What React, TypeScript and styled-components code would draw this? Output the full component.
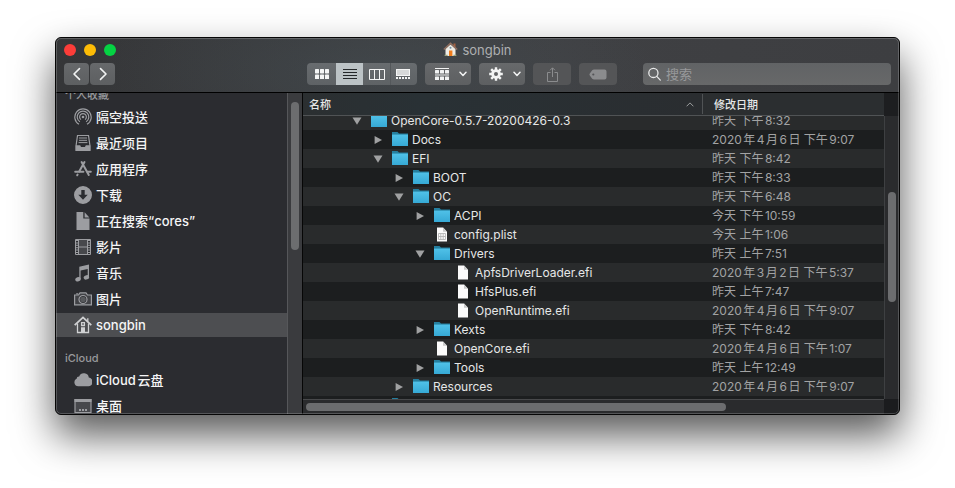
import React, { useLayoutEffect, useRef } from "react";
import styled, { createGlobalStyle } from "styled-components";

const GlobalStyle = createGlobalStyle`
  * { box-sizing: border-box; }
  body {
    margin: 0;
    background: #fff;
    font-family: Inter, "Noto Sans CJK SC", sans-serif;
    font-size: 12px;
    text-autospace: normal;
    -webkit-font-smoothing: antialiased;
  }
  button, input { font: inherit; color: inherit; border: 0; padding: 0; background: none; }
  a { color: inherit; text-decoration: none; }
  svg { display: block; flex: none; }
`;

const Desktop = styled.div`
  display: flex;
  height: 100vh;
  min-height: 300px;
  padding: 37px 55px 73px;
`;

const Window = styled.main`
  position: relative;
  flex: 1;
  min-width: 0;
  display: flex;
  flex-direction: column;
  overflow: hidden;
  border: 1px solid #060606;
  border-radius: 6px;
  background: #2b2c2f;
  box-shadow: 0 20px 40px rgba(0, 0, 0, 0.66);

  &::after {
    content: "";
    position: absolute;
    inset: 0;
    border: 1px solid rgba(255, 255, 255, 0.2);
    border-radius: 5px;
    pointer-events: none;
  }
`;

const TitleArea = styled.header`
  flex: none;
  border-bottom: 1px solid #000;
  background:
    radial-gradient(ellipse 280px 90px at 38% 60%, rgba(76, 90, 96, 0.34), transparent),
    linear-gradient(90deg, #353638, #3f4043 60%, #3d3e41);
`;

const TitleBar = styled.div`
  display: grid;
  grid-template-columns: 1fr auto 1fr;
  align-items: center;
  height: 23px;
  padding: 0 8px;
`;

const Lights = styled.div`
  display: flex;
  gap: 8px;
`;

const Light = styled.button<{ $color: string }>`
  width: 12px;
  height: 12px;
  border-radius: 50%;
  background: ${(p) => p.$color};
`;

const Title = styled.h1`
  display: flex;
  align-items: center;
  gap: 4px;
  margin: 0;
  font-size: 13px;
  font-weight: 400;
  line-height: 16px;
  color: #aeafb1;
`;

const Toolbar = styled.div`
  display: flex;
  align-items: center;
  gap: 8px;
  padding: 2px 8px 7px;
`;

const ButtonGroup = styled.div`
  display: flex;
  gap: 1px;
`;

const ToolButton = styled.button<{ $width: number; $dim?: boolean }>`
  display: flex;
  align-items: center;
  justify-content: center;
  width: ${(p) => p.$width}px;
  height: 22px;
  border-radius: 4px;
  background: ${(p) => (p.$dim ? "#545557" : "linear-gradient(#67696b, #5d5f61)")};
  color: ${(p) => (p.$dim ? "#8b8c8e" : "#f2f3f3")};
`;

const MenuButton = styled(ToolButton)`
  gap: 10px;
  padding-left: 6px;
`;

const Segments = styled.div`
  display: flex;
  margin-left: 184px;
  border-radius: 4px;
  overflow: hidden;
  background: linear-gradient(#686c6f, #5e6265);
`;

const Segment = styled.button<{ $selected?: boolean }>`
  display: flex;
  align-items: center;
  justify-content: center;
  width: 27px;
  height: 22px;
  color: ${(p) => (p.$selected ? "#24282a" : "#f4f5f5")};
  background: ${(p) => (p.$selected ? "#bcc3c6" : "transparent")};

  &:first-child { width: 29px; }
  &:last-child { border-left: 1px solid #54585b; padding-right: 3px; }
`;

const Search = styled.label`
  flex: 1;
  min-width: 0;
  display: flex;
  align-items: center;
  gap: 5px;
  height: 22px;
  margin-left: 18px;
  padding: 0 5px;
  border-radius: 4px;
  background: linear-gradient(#616365, #676869);
  color: #e8e9e9;
`;

const SearchInput = styled.input`
  flex: 1;
  min-width: 0;
  font-size: 13px;
  outline: none;

  &::placeholder { color: #98999b; opacity: 1; }
`;

const Body = styled.div`
  flex: 1;
  min-height: 0;
  display: flex;
`;

const Sidebar = styled.nav`
  flex: none;
  width: 231px;
  overflow: hidden;
  background: #2b2c30;
  color: #f5f5f6;
`;

const SidebarContent = styled.div`
  padding: 4px 0 40px;
`;

const SectionLabel = styled.h2`
  margin: 0;
  padding: 0 9px;
  font-size: 11px;
  font-weight: 500;
  line-height: 16px;
  color: #98999c;
`;

const Places = styled.ul`
  display: flex;
  flex-direction: column;
  gap: 2px;
  margin: 2px 0 13px;
  padding: 0;
  list-style: none;
`;

const Place = styled.a<{ $selected?: boolean }>`
  display: flex;
  align-items: center;
  gap: 4px;
  height: 24px;
  padding-left: 18px;
  font-size: 13px;
  font-weight: 500;
  line-height: 16px;
  white-space: nowrap;
  background: ${(p) => (p.$selected ? "#4d4e51" : "transparent")};

  svg { color: ${(p) => (p.$selected ? "#d0d1d3" : "#9c9da1")}; }
`;

const Lane = styled.div<{ $tone: string }>`
  flex: 1;
  background: ${(p) => p.$tone};
`;

const SidebarLane = styled(Lane)`
  flex: none;
  width: 16px;
  padding: 9px 3px 0;
  border-left: 1px solid #56575a;
  border-right: 1px solid #060606;
`;

const VerticalThumb = styled.div<{ $length: number; $offset?: number }>`
  width: 8px;
  height: ${(p) => p.$length}px;
  margin-top: ${(p) => p.$offset ?? 0}px;
  border-radius: 4px;
  background: #6c6d6f;
`;

const Browser = styled.section`
  flex: 1;
  min-width: 0;
  display: grid;
  grid-template-columns: minmax(0, 1fr) 15px;
  grid-template-rows: minmax(0, 1fr) 15px;
`;

const ListView = styled.div`
  overflow: hidden;
  background: #1c1e1f;
`;

const Table = styled.table`
  width: 100%;
  table-layout: fixed;
  border-spacing: 0;
  color: #e6e7e7;
`;

const HeaderCell = styled.th<{ $width?: number }>`
  position: sticky;
  top: 0;
  z-index: 1;
  width: ${(p) => (p.$width ? `${p.$width}px` : "auto")};
  height: 23px;
  padding: 0;
  border-bottom: 1px solid #505355;
  background: ${(p) => (p.$width ? "#2b2e30" : "linear-gradient(90deg, #2b2f31, #293135 30%, #2a2d30)")};
  font-size: 11px;
  font-weight: 500;
  text-align: left;
`;

const HeaderLabel = styled.button<{ $ruled?: boolean }>`
  display: flex;
  align-items: center;
  justify-content: space-between;
  width: 100%;
  height: 20px;
  padding: 0 8px 0 ${(p) => (p.$ruled ? 11 : 6)}px;
  border-left: ${(p) => (p.$ruled ? "1px solid #505355" : "0")};
`;

const Row = styled.tr`
  height: 19px;
  background: #1c1e1f;

  &:nth-child(odd) { background: #292b2c; }
`;

const Cell = styled.td`
  height: 19px;
  padding: 0;
  line-height: 19px;
  white-space: nowrap;
  overflow: hidden;
`;

const DateCell = styled(Cell)`
  padding-left: 10px;
  color: #a2a3a4;
`;

const Name = styled.div<{ $level: number }>`
  display: flex;
  align-items: center;
  height: 19px;
  padding-left: ${(p) => 48 + p.$level * 21}px;
`;

const Disclosure = styled.button`
  display: flex;
  align-items: center;
  justify-content: center;
  width: 12px;
  height: 19px;
  margin-right: 8px;
  color: #a0a1a2;
`;

const DisclosureGap = styled.span`
  width: 20px;
`;

const FileIcon = styled.span`
  display: flex;
  justify-content: center;
  width: 16px;
  margin-right: 4px;
  padding-bottom: 1px;
`;

const RightRail = styled.div`
  display: flex;
  flex-direction: column;
`;

const RailHead = styled.div`
  height: 23px;
  background: #1d1e20;
`;

const RightLane = styled(Lane)`
  padding: 0 3px;
  border-left: 1px solid #3e4042;
`;

const BottomLane = styled.div`
  padding: 3px 3px 0;
  border-top: 1px solid #48494b;
  background: #2a2b2d;
`;

const HorizontalThumb = styled.div`
  width: 73%;
  height: 8px;
  border-radius: 4px;
  background: #6c6d6f;
`;

const Corner = styled.div`
  background: #1b1c1e;
`;

const HomeEmoji = () => (
  <svg width="15" height="15" viewBox="0 0 15 15" aria-hidden="true">
    <rect x="10.500" y="1.500" width="2" height="4" fill="#a5613f" />
    <path d="M2.500 7 7.500 2.500 12.500 7V14H2.500Z" fill="#eeece5" />
    <path d="M.8 7.600 7.500 1.200 14.200 7.600" fill="none" stroke="#937060" strokeWidth="1.400" />
    <rect x="6" y="8.500" width="3.400" height="5.500" fill="#ef7d1c" />
    <circle cx="7.500" cy="5.800" r="1" fill="#6f8fa3" />
    <path d="M1.600 14V12.800h3V14ZM10.400 14v-1.200h3V14Z" fill="#9aa57d" />
  </svg>
);

const Chevron = ({ d }: { d: string }) => (
  <svg width="16" height="16" viewBox="0 0 16 16" fill="none" stroke="currentColor" strokeWidth="1.6" strokeLinecap="round" strokeLinejoin="round">
    <path d={d} />
  </svg>
);

const MenuArrow = () => (
  <svg width="8" height="6" viewBox="0 0 8 6" fill="none" stroke="currentColor" strokeWidth="1.5" strokeLinecap="round" strokeLinejoin="round">
    <path d="M1 1.2 4 4.4 7 1.2" />
  </svg>
);

const GridIcon = () => (
  <svg width="14" height="10" viewBox="0 0 14 10" fill="currentColor">
    {[0, 5, 10].flatMap((x) => [0, 5.6].map((y) => <rect key={`${x}-${y}`} x={x} y={y} width="4" height="4.4" rx=".6" />))}
  </svg>
);

const ListIcon = () => (
  <svg width="14" height="10" viewBox="0 0 14 10" fill="currentColor">
    {[0, 3, 6, 9].map((y) => <rect key={y} y={y} width="14" height="1" />)}
  </svg>
);

const ColumnsIcon = () => (
  <svg width="16" height="11" viewBox="0 0 16 11" fill="none" stroke="currentColor">
    <path d="M.5.5h15v10H.5ZM5.5.5v10M10.5.5v10" />
  </svg>
);

const GalleryIcon = () => (
  <svg width="14" height="10" viewBox="0 0 14 10" fill="currentColor">
    <rect x=".5" y=".5" width="13" height="6" fillOpacity=".8" stroke="currentColor" />
    {[0, 3, 6, 9, 12].map((x) => <rect key={x} x={x} y="8" width="2" height="2" />)}
  </svg>
);

const GroupIcon = () => (
  <svg width="14" height="13" viewBox="0 0 14 13" fill="currentColor">
    <rect width="14" height="1" />
    <rect y="6.5" width="14" height="1" />
    {[0, 5, 10].flatMap((x) => [2, 8.5].map((y) => <rect key={`${x}-${y}`} x={x} y={y} width="4" height="3.6" rx=".5" />))}
  </svg>
);

const GearIcon = () => (
  <svg width="14" height="14" viewBox="0 0 14 14">
    <g stroke="currentColor" strokeWidth="2.4">
      {[0, 45, 90, 135].map((a) => <path key={a} d="M7 .2V3.6M7 10.4V13.8" transform={`rotate(${a} 7 7)`} />)}
    </g>
    <circle cx="7" cy="7" r="3.4" fill="none" stroke="currentColor" strokeWidth="2.8" />
  </svg>
);

const ShareIcon = () => (
  <svg width="11" height="15" viewBox="0 0 11 15" fill="none" stroke="currentColor">
    <path d="M3.5 5.5H.5v9h10v-9h-3M5.5 10V1M3 3.3 5.5.8 8 3.3" />
  </svg>
);

const TagIcon = () => (
  <svg width="18" height="11" viewBox="0 0 18 11" fill="currentColor" fillRule="evenodd">
    <path d="M5 .5H15.5Q17.5.5 17.5 2.5V8.5Q17.5 10.5 15.5 10.5H5Q4 10.5 3.2 9.7L.8 6.6Q0 5.5.8 4.4L3.2 1.3Q4 .5 5 .5ZM4.3 4.4a1.1 1.1 0 1 0 0 2.2a1.1 1.1 0 1 0 0-2.2Z" />
  </svg>
);

const SearchIcon = () => (
  <svg width="13" height="14" viewBox="0 0 13 14" fill="none" stroke="currentColor" strokeWidth="1.3" strokeLinecap="round">
    <circle cx="5.4" cy="5.9" r="4.6" />
    <path d="m8.8 9.4 3.5 3.7" />
  </svg>
);

const SortArrow = () => (
  <svg width="8" height="5" viewBox="0 0 8 5" fill="none" stroke="#9b9d9e">
    <path d="M.6 4.3 4 .9 7.4 4.3" />
  </svg>
);

const placeShapes: Record<string, React.ReactNode> = {
  airdrop: (
    <g fill="none" stroke="currentColor" strokeWidth="1.2">
      <path d="M5 16.2A8.2 8.2 0 1 1 13 16.2" />
      <path d="M5.9 13.8A5.8 5.8 0 1 1 12.1 13.8" />
      <path d="M6.9 11.6A3.4 3.4 0 1 1 11.1 11.6" />
      <circle cx="9" cy="9" r="1.3" fill="currentColor" stroke="none" />
    </g>
  ),
  recents: (
    <g fill="none" stroke="currentColor">
      <path d="M3.5 1.5h11l1.500 10.500v4.400H2V12Z" strokeWidth="1.200" />
      <path d="M5 4h8M5 6.300h8M4.600 8.600h8.800" />
      <path d="M1.800 11.200h4.400l.8 1.700h4l.8-1.700h4.400v5.400H1.800Z" fill="currentColor" stroke="none" />
    </g>
  ),
  apps: (
    <g fill="none" stroke="currentColor" strokeWidth="2" strokeLinecap="round">
      <path d="M7.6 2 14.8 15M10.5 2 5.2 11.5M3.6 14.6 3.2 15.3" />
      <path d="M1.2 11.8H9.4M13.4 11.8h3.4" />
    </g>
  ),
  downloads: (
    <path fill="currentColor" fillRule="evenodd" d="M9 0a9 9 0 1 0 0 18A9 9 0 0 0 9 0ZM7.3 4h3.4v4.8h3L9 13.8 4.3 8.8h3Z" />
  ),
  document: (
    <g fill="currentColor">
      <path d="M2.5 0H9.3V6.6H15.5V18H2.5Z" />
      <path d="M10.6.2 15.4 5.4H10.6Z" />
    </g>
  ),
  movies: (
    <g fill="none" stroke="currentColor">
      <path d="M1.5 1.5h15v15h-15ZM4.5 1.5v15M13.5 1.5v15M4.5 9h9" />
      <path d="M3 2v14M15 2v14" strokeWidth="2" strokeDasharray="1 1.4" />
      <path d="M5 2h8v14H5Z" fill="currentColor" fillOpacity=".25" stroke="none" />
    </g>
  ),
  music: (
    <g fill="currentColor">
      <path d="M5.3 2.700 15 .6V13.200H13.700V5L6.600 6.500V15.200H5.300Z" />
      <ellipse cx="4" cy="15.3" rx="2.8" ry="2.1" transform="rotate(-20 4 15.3)" />
      <ellipse cx="12.4" cy="13.4" rx="2.8" ry="2.1" transform="rotate(-20 12.4 13.4)" />
    </g>
  ),
  pictures: (
    <g fill="none" stroke="currentColor" strokeWidth="1.2">
      <path d="M.6 5h3.9L6 2.8h6L13.5 5h3.9v9.800H.6Z" fill="currentColor" fillOpacity=".2" />
      <circle cx="9" cy="9.5" r="4" fill="#2b2c30" />
      <circle cx="9" cy="9.5" r="2.8" fill="currentColor" fillOpacity=".4" stroke="none" />
      <path d="M2.2 3.8h2" />
    </g>
  ),
  home: (
    <g fill="none" stroke="currentColor" strokeWidth="1.3">
      <path d="M.7 9.2 9 1.4 17.3 9.2" strokeWidth="1.8" />
      <path d="M3.5 7.5V16.5h11V7.5M13.8 5.5V2.2" />
      <path d="M7.6 6.7h2.8v2.8H7.6Z" />
      <path d="M7 11.3h4v5H7Z" fill="currentColor" stroke="none" />
    </g>
  ),
  cloud: (
    <path fill="currentColor" d="M4.2 15.2A3.9 3.9 0 0 1 2.6 7.8 2.5 2.5 0 0 1 5.2 5.4 5 5 0 0 1 14.8 6.6 4.3 4.3 0 0 1 14 15.2Z" />
  ),
  desktop: (
    <g fill="currentColor">
      <path d="M1 2.5H17V15.5H1Z" fillOpacity=".25" stroke="currentColor" strokeWidth="1.2" />
      <rect x=".5" y="2" width="17" height="3" />
      <path d="M5 12h2v2H5ZM8 12h2v2H8ZM11 12h2v2h-2Z" />
    </g>
  ),
};

const PlaceIcon = ({ kind }: { kind: string }) => (
  <svg width="18" height="18" viewBox="0 0 18 18" aria-hidden="true">{placeShapes[kind]}</svg>
);

const FolderIcon = () => (
  <svg width="16" height="14" viewBox="0 0 16 14" aria-hidden="true">
    <defs>
      <linearGradient id="folder" x2="0" y2="1">
        <stop offset="0" stopColor="#50c1e8" />
        <stop offset="1" stopColor="#36a9d5" />
      </linearGradient>
    </defs>
    <path d="M0 0h5.5L7 1.4h9V4H0Z" fill="#257f9f" />
    <rect y="2.6" width="16" height="11.4" fill="url(#folder)" />
  </svg>
);

const DocumentIcon = ({ grid }: { grid?: boolean }) => (
  <svg width="10" height="15" viewBox="0 0 10 15" aria-hidden="true">
    <path d="M0 .5H6L10 4.8V14.5H0Z" fill="#fbfbfb" />
    <path d="M6 .5 10 4.8H6Z" fill="#c9caca" />
    {grid && <path d="M1.5 6.5h7v6h-7ZM1.5 9.5h7M3.8 6.5v6M6.2 6.5v6" fill="none" stroke="#b4b5b5" strokeWidth=".9" />}
  </svg>
);

const Triangle = ({ open }: { open: boolean }) => (
  <svg width="10" height="8" viewBox="0 0 10 8" fill="currentColor">
    <path d={open ? "M.5.5h9L5 7.8Z" : "M1.6 0 9 4 1.6 8Z"} />
  </svg>
);

const places = [
  ["airdrop", "隔空投送"],
  ["recents", "最近项目"],
  ["apps", "应用程序"],
  ["downloads", "下载"],
  ["document", "正在搜索“cores”"],
  ["movies", "影片"],
  ["music", "音乐"],
  ["pictures", "图片"],
  ["home", "songbin"],
];

const cloudPlaces = [
  ["cloud", "iCloud云盘"],
  ["desktop", "桌面"],
];

type Kind = "open" | "closed" | "plist" | "file";

const entries: [number, Kind, string, string][] = [
  [0, "open", "OpenCore-0.5.7-20200426-0.3", "昨天 下午8:32"],
  [1, "closed", "Docs", "2020年4月6日 下午9:07"],
  [1, "open", "EFI", "昨天 下午8:42"],
  [2, "closed", "BOOT", "昨天 下午8:33"],
  [2, "open", "OC", "昨天 下午6:48"],
  [3, "closed", "ACPI", "今天 下午10:59"],
  [3, "plist", "config.plist", "今天 上午1:06"],
  [3, "open", "Drivers", "昨天 上午7:51"],
  [4, "file", "ApfsDriverLoader.efi", "2020年3月2日 下午5:37"],
  [4, "file", "HfsPlus.efi", "昨天 上午7:47"],
  [4, "file", "OpenRuntime.efi", "2020年4月6日 下午9:07"],
  [3, "closed", "Kexts", "昨天 下午8:42"],
  [3, "file", "OpenCore.efi", "2020年4月6日 下午1:07"],
  [3, "closed", "Tools", "昨天 上午12:49"],
  [2, "closed", "Resources", "2020年4月6日 下午9:07"],
  [1, "closed", "", ""],
];

function useInitialScroll(top: number) {
  const ref = useRef<HTMLDivElement>(null);
  useLayoutEffect(() => {
    if (ref.current) ref.current.scrollTop = top;
  }, [top]);
  return ref;
}

const PlaceList = ({ items, selected }: { items: string[][]; selected?: string }) => (
  <Places>
    {items.map(([kind, label]) => (
      <li key={kind}>
        <Place href={`#${kind}`} $selected={kind === selected} aria-current={kind === selected ? "page" : undefined}>
          <PlaceIcon kind={kind} />
          {label}
        </Place>
      </li>
    ))}
  </Places>
);

const Entry = ({ level, kind, name, date }: { level: number; kind: Kind; name: string; date: string }) => {
  const folder = kind === "open" || kind === "closed";
  return (
    <Row>
      <Cell>
        <Name $level={level}>
          {folder ? (
            <Disclosure aria-label={name} aria-expanded={kind === "open"}>
              {name && <Triangle open={kind === "open"} />}
            </Disclosure>
          ) : (
            <DisclosureGap />
          )}
          <FileIcon>{folder ? <FolderIcon /> : <DocumentIcon grid={kind === "plist"} />}</FileIcon>
          {name}
        </Name>
      </Cell>
      <DateCell>{date}</DateCell>
    </Row>
  );
};

export default function App() {
  const sidebarRef = useInitialScroll(10);
  const listRef = useInitialScroll(5);

  return (
    <>
      <GlobalStyle />
      <Desktop>
        <Window>
          <TitleArea>
            <TitleBar>
              <Lights>
                <Light $color="#fc3d39" aria-label="关闭" />
                <Light $color="#fdbc06" aria-label="最小化" />
                <Light $color="#05d343" aria-label="缩放" />
              </Lights>
              <Title><HomeEmoji />songbin</Title>
            </TitleBar>
            <Toolbar>
              <ButtonGroup>
                <ToolButton $width={25} aria-label="后退"><Chevron d="M10.5 2.6 5 8l5.5 5.4" /></ToolButton>
                <ToolButton $width={25} aria-label="前进"><Chevron d="M5.5 2.6 11 8l-5.5 5.4" /></ToolButton>
              </ButtonGroup>
              <Segments role="group">
                <Segment aria-label="图标"><GridIcon /></Segment>
                <Segment $selected aria-pressed aria-label="列表"><ListIcon /></Segment>
                <Segment aria-label="分栏"><ColumnsIcon /></Segment>
                <Segment aria-label="画廊"><GalleryIcon /></Segment>
              </Segments>
              <MenuButton $width={46} aria-label="分组"><GroupIcon /><MenuArrow /></MenuButton>
              <MenuButton $width={46} aria-label="操作"><GearIcon /><MenuArrow /></MenuButton>
              <ToolButton $width={38} $dim aria-label="共享"><ShareIcon /></ToolButton>
              <ToolButton $width={38} $dim aria-label="标签"><TagIcon /></ToolButton>
              <Search>
                <SearchIcon />
                <SearchInput type="text" placeholder="搜索" aria-label="搜索" />
              </Search>
            </Toolbar>
          </TitleArea>
          <Body>
            <Sidebar ref={sidebarRef}>
              <SidebarContent>
                <SectionLabel>个人收藏</SectionLabel>
                <PlaceList items={places} selected="home" />
                <SectionLabel>iCloud</SectionLabel>
                <PlaceList items={cloudPlaces} />
              </SidebarContent>
            </Sidebar>
            <SidebarLane $tone="#3a3b3e"><VerticalThumb $length={148} /></SidebarLane>
            <Browser>
              <ListView ref={listRef}>
                <Table>
                  <thead>
                    <tr>
                      <HeaderCell><HeaderLabel>名称<SortArrow /></HeaderLabel></HeaderCell>
                      <HeaderCell $width={182}><HeaderLabel $ruled>修改日期</HeaderLabel></HeaderCell>
                    </tr>
                  </thead>
                  <tbody>
                    {entries.map(([level, kind, name, date], i) => (
                      <Entry key={i} level={level} kind={kind} name={name} date={date} />
                    ))}
                  </tbody>
                </Table>
              </ListView>
              <RightRail>
                <RailHead />
                <RightLane $tone="#2a2b2d"><VerticalThumb $length={110} $offset={76} /></RightLane>
              </RightRail>
              <BottomLane><HorizontalThumb /></BottomLane>
              <Corner />
            </Browser>
          </Body>
        </Window>
      </Desktop>
    </>
  );
}
